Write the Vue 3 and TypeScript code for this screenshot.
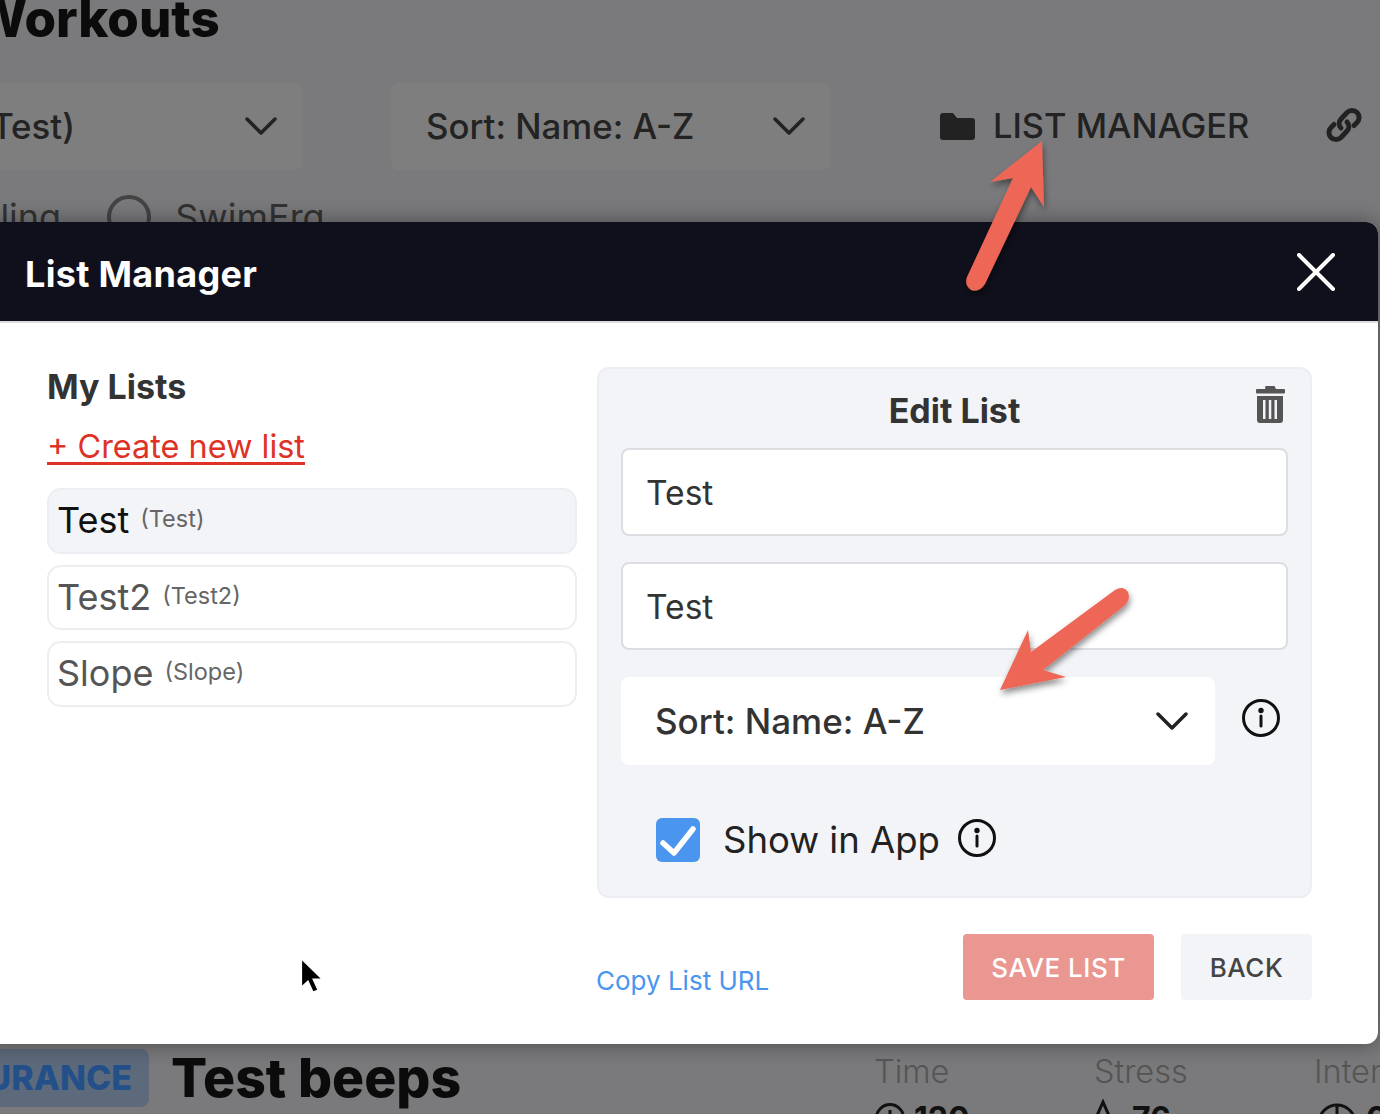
<script setup lang="ts">
const lists = [
  { name: 'Test', sub: '(Test)', active: true },
  { name: 'Test2', sub: '(Test2)', active: false },
  { name: 'Slope', sub: '(Slope)', active: false },
]
</script>

<template>
  <div class="page">
    <div class="backdrop">
      <h1 class="workouts">Workouts</h1>
      <div class="filters">
        <div class="bg-select first">
          <span>Test (Test)</span>
          <svg class="chev" viewBox="0 0 32 18" width="32" height="18"><path d="M2 2 L16 16 L30 2" /></svg>
        </div>
        <div class="bg-select second">
          <span>Sort: Name: A-Z</span>
          <svg class="chev" viewBox="0 0 32 18" width="32" height="18"><path d="M2 2 L16 16 L30 2" /></svg>
        </div>
        <div class="manager">
          <svg viewBox="0 0 36 27" width="36" height="27"><path fill="#222" d="M3 0 H13 L17 5 H32 a3 3 0 0 1 3 3 V24 a3 3 0 0 1 -3 3 H3 a3 3 0 0 1 -3 -3 V3 a3 3 0 0 1 3 -3 Z" /></svg>
          <span>LIST MANAGER</span>
        </div>
        <svg class="link" viewBox="0 0 36 36" width="36" height="36" fill="none" stroke="#222" stroke-width="5" stroke-linecap="round">
          <path d="M15 21 a6.5 6.5 0 0 1 0 -9 l6 -6.500 a7 7 0 0 1 10 10 l-3 3" />
          <path d="M21 15 a6.500 6.500 0 0 1 0 9 l-6 6.500 a7 7 0 0 1 -10 -10 l3 -3" />
        </svg>
      </div>
      <div class="radios">
        <span class="rlabel">Cycling</span>
        <span class="radio"></span>
        <span class="rlabel">SwimErg</span>
      </div>
      <div class="bottom">
        <span class="badge">ENDURANCE</span>
        <span class="beeps">Test beeps</span>
        <div class="stats">
          <div class="stat">
            <span class="stat-label">Time</span>
            <span class="stat-value">
              <svg viewBox="0 0 30 30" width="30" height="30" fill="none" stroke="#111" stroke-width="3"><circle cx="15" cy="15" r="13.500" /><path d="M15 7 V15" /></svg>
              <span>120<small>m</small></span>
            </span>
          </div>
          <div class="stat">
            <span class="stat-label">Stress</span>
            <span class="stat-value">
              <svg viewBox="0 0 30 30" width="30" height="30" fill="none" stroke="#111" stroke-width="3"><path d="M4 28 L15 3 L26 28" /></svg>
              <span class="stress-num">76</span>
            </span>
          </div>
          <div class="stat">
            <span class="stat-label">Intensity</span>
            <span class="stat-value">
              <svg viewBox="0 0 40 40" width="40" height="40" fill="none" stroke="#111" stroke-width="3"><circle cx="20" cy="20" r="18" /><path d="M20 2 V12 M2 20 H12 M28 20 H38" /></svg>
              <span>0.8</span>
            </span>
          </div>
        </div>
      </div>
    </div>

    <section class="modal">
      <header class="modal-head">
        <h2>List Manager</h2>
        <svg viewBox="0 0 38 38" width="38" height="38" fill="none" stroke="#fff" stroke-width="4" stroke-linecap="round"><path d="M2 2 L36 36 M36 2 L2 36" /></svg>
      </header>
      <div class="modal-body">
        <div class="columns">
          <div class="left">
            <h3>My Lists</h3>
            <a class="create">+ Create new list</a>
            <div class="items">
              <div v-for="l in lists" :key="l.name" class="item" :class="{ active: l.active }">
                <span class="item-name">{{ l.name }}</span>
                <span class="item-sub">{{ l.sub }}</span>
              </div>
            </div>
          </div>
          <div class="panel">
            <svg class="trash" viewBox="0 0 30 37" width="30" height="37">
              <path fill="#555" d="M10.500 0 h9 l1.500 3 h8 a1 1 0 0 1 1 1 v2.500 a1 1 0 0 1 -1 1 h-27 a1 1 0 0 1 -1 -1 V4 a1 1 0 0 1 1 -1 h8 Z" />
              <path fill="#555" fill-rule="evenodd" d="M2 10 h26 v24 a3 3 0 0 1 -3 3 h-20 a3 3 0 0 1 -3 -3 Z M8 14 v19 h2.500 v-19 Z M13.800 14 v19 h2.500 v-19 Z M19.500 14 v19 h2.500 v-19 Z" />
            </svg>
            <h3 class="edit-title">Edit List</h3>
            <input class="field" value="Test" readonly />
            <input class="field second-field" value="Test" readonly />
            <div class="sort-row">
              <div class="sort">
                <span>Sort: Name: A-Z</span>
                <svg class="chev" viewBox="0 0 32 18" width="32" height="18"><path d="M2 2 L16 16 L30 2" stroke="#333" /></svg>
              </div>
              <svg class="info" viewBox="0 0 38 38" width="38" height="38" fill="none" stroke="#111" stroke-width="3">
                <circle cx="19" cy="19" r="17.500" />
                <path d="M19 17 V27" stroke-linecap="round" />
                <circle cx="19" cy="11.500" r="1.200" fill="#111" />
              </svg>
            </div>
            <div class="check-row">
              <span class="checkbox">
                <svg viewBox="0 0 44 44" width="44" height="44" fill="none" stroke="#fff" stroke-width="5.500" stroke-linecap="round" stroke-linejoin="round"><path d="M7 25 L18 35 L37 11" /></svg>
              </span>
              <span class="check-label">Show in App</span>
              <svg class="info" viewBox="0 0 38 38" width="38" height="38" fill="none" stroke="#111" stroke-width="3">
                <circle cx="19" cy="19" r="17.500" />
                <path d="M19 17 V27" stroke-linecap="round" />
                <circle cx="19" cy="11.500" r="1.200" fill="#111" />
              </svg>
            </div>
          </div>
        </div>
        <footer class="foot">
          <a class="copy">Copy List URL</a>
          <div class="buttons">
            <button class="btn save">SAVE LIST</button>
            <button class="btn back">BACK</button>
          </div>
        </footer>
      </div>
    </section>

    <svg class="annotations" viewBox="0 0 1380 1114" width="1380" height="1114">
      <defs>
        <filter id="arrowShadow" x="-30%" y="-30%" width="160%" height="160%">
          <feDropShadow dx="1" dy="4" stdDeviation="3" flood-color="#000" flood-opacity="0.45" />
        </filter>
      </defs>
      <g filter="url(#arrowShadow)" fill="#ee6655">
        <path d="M1042 141 L1044 207 L1031 187 L985 284 Q979 293 971 290 Q964 285 967 277 L1013 178 L990 182 Z" />
        <path d="M1000 690 L1028 630 L1031 652 L1115 590 Q1123 585 1128 592 Q1131 600 1124 606 L1043 670 L1066 677 Z" />
      </g>
      <path d="M301.500 959 L301.500 987 L308 981 L313 992 L318 990 L313 979 L322 979 Z" fill="#000" stroke="#fff" stroke-width="1.200" />
    </svg>
  </div>
</template>

<style scoped>
.page {
  position: relative;
  width: 1380px;
  height: 1114px;
  overflow: hidden;
  background: #7a7a7c;
  font-family: Inter, "Liberation Sans", sans-serif;
  color: #222;
}
.workouts {
  margin: -16px 0 0 -27px;
  font-size: 51px;
  line-height: 70px;
  font-weight: 800;
  color: #0b0b0b;
  white-space: nowrap;
}
.filters {
  display: flex;
  align-items: center;
  height: 88px;
  margin-top: 28px;
}
.bg-select {
  display: flex;
  align-items: center;
  justify-content: space-between;
  height: 87px;
  background: #7e7e7e;
  border-radius: 8px;
  font-size: 34.800px;
  font-weight: 500;
  line-height: 85px;
  color: #232323;
  white-space: nowrap;
  box-sizing: border-box;
}
.first {
  width: 453px;
  margin-left: -150px;
  padding: 0 26px 0 48px;
}
.second {
  width: 440px;
  margin-left: 88px;
  padding: 0 26px 0 35px;
}
.chev path {
  fill: none;
  stroke: #222;
  stroke-width: 3.500;
  stroke-linecap: round;
  stroke-linejoin: round;
}
.manager {
  display: flex;
  align-items: center;
  gap: 17px;
  margin-left: 109px;
  font-size: 34.400px;
  font-weight: 500;
  line-height: 40px;
  white-space: nowrap;
}
.link {
  margin-left: 77px;
  margin-top: -2px;
  flex: none;
}
.radios {
  display: flex;
  align-items: center;
  height: 44px;
  margin-top: 25px;
  margin-left: -66px;
  font-size: 36px;
  color: #333;
}
.rlabel {
  white-space: nowrap;
}
.radio {
  flex: none;
  width: 44px;
  height: 44px;
  margin: 0 24px 0 46px;
  box-sizing: border-box;
  border: 4px solid #444;
  border-radius: 50%;
}
.bottom {
  display: flex;
  align-items: flex-start;
  margin-top: 810px;
  margin-left: -88px;
}
.badge {
  flex: none;
  width: 237px;
  height: 58px;
  line-height: 58px;
  text-align: right;
  padding-right: 17px;
  box-sizing: border-box;
  background: #5d6a7c;
  border-radius: 8px;
  font-size: 34px;
  font-weight: 800;
  color: #24508a;
  white-space: nowrap;
}
.beeps {
  flex: none;
  width: 703px;
  margin-left: 22px;
  font-size: 53.500px;
  line-height: 58px;
  font-weight: 800;
  color: #0b0b0b;
}
.stats {
  display: flex;
  margin-top: 3px;
}
.stat {
  display: flex;
  flex-direction: column;
  flex: none;
  width: 220px;
}
.stat-label {
  font-size: 32.500px;
  line-height: 40px;
  font-weight: 300;
  color: #555;
}
.stat-value {
  display: flex;
  align-items: flex-start;
  gap: 9px;
  margin-top: 11px;
  font-size: 32px;
  line-height: 32px;
  font-weight: 700;
  color: #111;
}
.stat-value svg {
  flex: none;
}
.stat-value small {
  font-size: 22px;
  font-weight: 500;
}
.stress-num {
  margin-left: 5px;
}
.stat:first-child .stat-value svg {
  margin-left: 1px;
}
.stat:nth-child(2) .stat-value svg {
  margin-left: -6px;
  margin-top: -4px;
}
.stat:nth-child(3) .stat-value svg {
  margin-left: 3px;
}

.modal {
  position: absolute;
  left: -20px;
  top: 222px;
  width: 1398px;
  background: #fff;
  border-radius: 12px;
  box-shadow: 0 0 22px rgba(0, 0, 0, 0.4);
  overflow: hidden;
}
.modal-head {
  display: flex;
  align-items: center;
  justify-content: space-between;
  box-sizing: border-box;
  height: 101px;
  padding: 0 43px 0 45px;
  background: #10101c;
  border-bottom: 2px solid #dcdcdc;
}
.modal-head h2 {
  margin: 5px 0 0;
  font-size: 36px;
  font-weight: 700;
  letter-spacing: 0.300px;
  color: #fff;
}
.modal-body {
  padding: 44px 66px 44px 67px;
}
.columns {
  display: flex;
  gap: 20px;
  align-items: flex-start;
}
.left {
  flex: none;
  width: 530px;
}
.left h3 {
  margin: 0;
  font-size: 34px;
  line-height: 40px;
  font-weight: 700;
  color: #333;
}
.create {
  display: inline-block;
  margin-top: 20px;
  font-size: 32.400px;
  line-height: 40px;
  font-weight: 400;
  color: #de3226;
  text-decoration: underline;
  text-underline-offset: 4px;
  text-decoration-thickness: 3px;
}
.items {
  display: flex;
  flex-direction: column;
  gap: 11px;
  margin-top: 21px;
}
.item {
  display: flex;
  align-items: center;
  gap: 11px;
  box-sizing: border-box;
  height: 65.500px;
  padding: 0 8px;
  border: 2px solid #eeeeef;
  border-radius: 14px;
  color: #555;
}
.item.active {
  background: #f3f4f8;
  border-color: #eceef3;
  color: #111;
}
.item-name {
  font-size: 36px;
  line-height: 44px;
  margin-top: -1px;
  font-weight: 400;
}
.item-sub {
  font-size: 23.500px;
  line-height: 30px;
  margin-top: -3px;
  color: #666;
}
.panel {
  position: relative;
  flex: none;
  box-sizing: border-box;
  width: 715px;
  height: 531px;
  padding: 21px 22px 0 22px;
  background: #f3f4f8;
  border: 2px solid #eceef3;
  border-radius: 12px;
}
.trash {
  position: absolute;
  top: 17px;
  right: 25px;
}
.edit-title {
  margin: 0 0 17px;
  text-align: center;
  font-size: 34px;
  line-height: 41px;
  font-weight: 700;
  color: #333;
}
.field {
  display: block;
  box-sizing: border-box;
  width: 667px;
  height: 88px;
  padding: 0 23px;
  background: #fff;
  border: 2px solid #dcdde1;
  border-radius: 8px;
  font-family: inherit;
  font-size: 33.600px;
  color: #333;
  outline: none;
}
.second-field {
  margin-top: 26px;
}
.sort-row {
  display: flex;
  align-items: center;
  margin-top: 27px;
}
.sort {
  display: flex;
  align-items: center;
  justify-content: space-between;
  box-sizing: border-box;
  width: 594px;
  height: 88px;
  padding: 0 27px 0 34px;
  background: #fff;
  border-radius: 8px;
  font-size: 35px;
  font-weight: 500;
  line-height: 86px;
  color: #333;
}
.sort-row .info {
  margin: -6px 0 0 27px;
}
.check-row {
  display: flex;
  align-items: center;
  margin-top: 53px;
  padding-left: 35px;
}
.checkbox {
  display: block;
  width: 44px;
  height: 44px;
  background: #4a96ee;
  border-radius: 6px;
}
.check-label {
  margin-left: 23px;
  font-size: 36.500px;
  line-height: 44px;
  color: #222;
}
.check-row .info {
  margin: -4px 0 0 18px;
}
.foot {
  display: flex;
  align-items: flex-start;
  justify-content: space-between;
  margin-top: 36px;
  padding-left: 549px;
}
.copy {
  margin-top: 28px;
  font-size: 26px;
  line-height: 38px;
  color: #4a96ee;
}
.buttons {
  display: flex;
  gap: 27px;
}
.btn {
  height: 66px;
  border: none;
  border-radius: 4px;
  font-family: inherit;
  font-size: 26px;
  font-weight: 500;
  letter-spacing: 0.500px;
}
.save {
  width: 191px;
  background: #e99790;
  color: #fff;
}
.back {
  width: 131px;
  background: #f3f4f8;
  color: #444;
}
.annotations {
  position: absolute;
  left: 0;
  top: 0;
  pointer-events: none;
}
</style>
